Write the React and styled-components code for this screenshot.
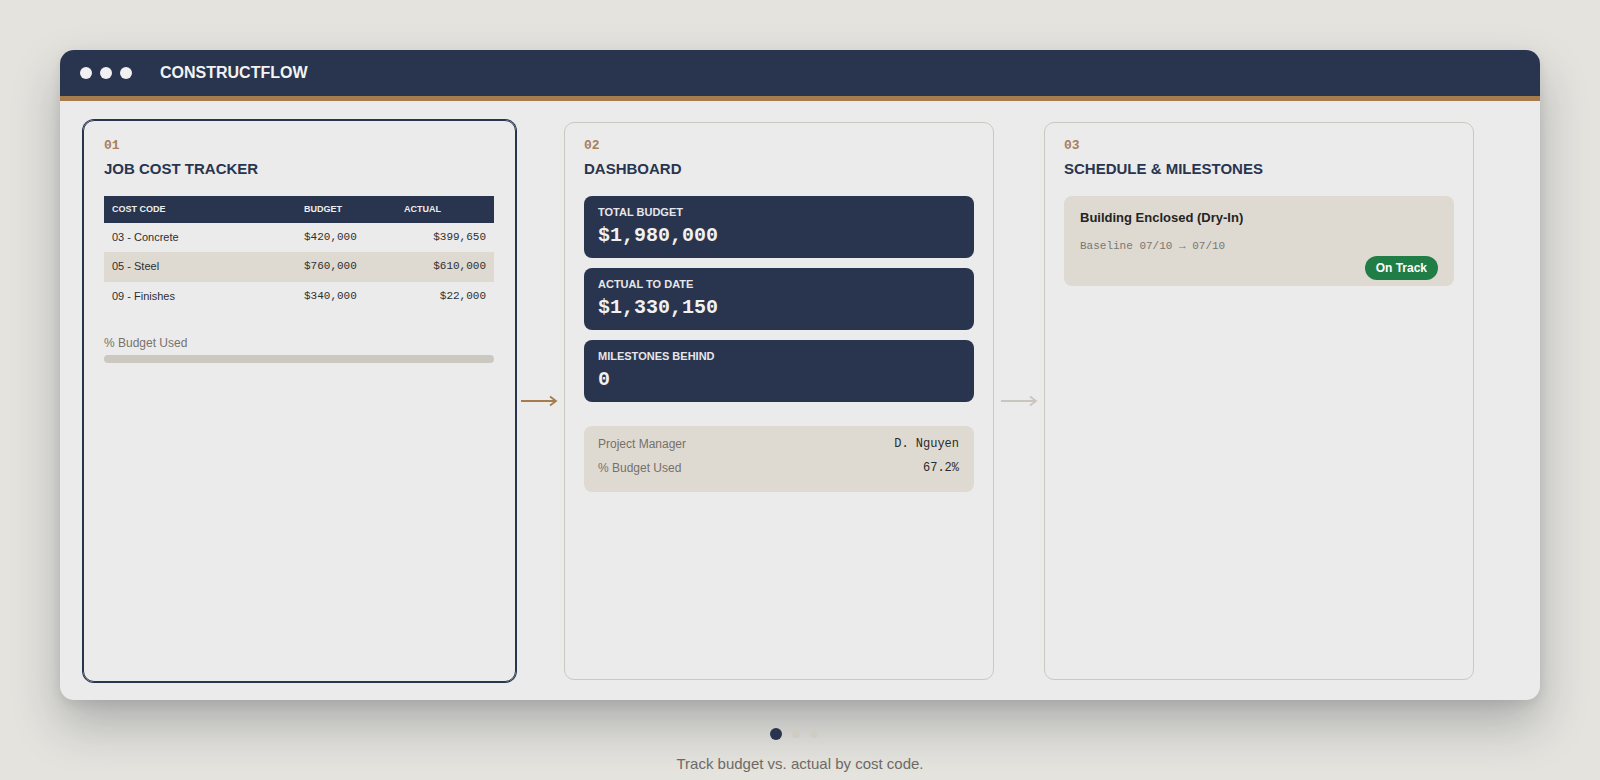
import styled, { createGlobalStyle } from "styled-components";

const NAVY = "#29354f";
const GOLD = "#a67c4e";
const BEIGE = "#dedad2";

const GlobalStyle = createGlobalStyle`
  * { box-sizing: border-box; }
  html, body {
    margin: 0;
    background: #e4e3de;
    font-family: "Liberation Sans", Arial, sans-serif;
  }
`;

const costRows = [
  { code: "03 - Concrete", budget: "$420,000", actual: "$399,650" },
  { code: "05 - Steel", budget: "$760,000", actual: "$610,000" },
  { code: "09 - Finishes", budget: "$340,000", actual: "$22,000" },
];

const stats = [
  { label: "TOTAL BUDGET", value: "$1,980,000" },
  { label: "ACTUAL TO DATE", value: "$1,330,150" },
  { label: "MILESTONES BEHIND", value: "0" },
];

export default function App() {
  return (
    <>
      <GlobalStyle />
      <Page>
        <Window>
          <TitleBar>
            <Lights>
              <Light />
              <Light />
              <Light />
            </Lights>
            <Brand>CONSTRUCTFLOW</Brand>
          </TitleBar>

          <Track>
            <Panel $active>
              <StepNum>01</StepNum>
              <StepTitle>JOB COST TRACKER</StepTitle>
              <CostTable>
                <thead>
                  <tr>
                    <Th>COST CODE</Th>
                    <Th $w={100}>BUDGET</Th>
                    <Th $w={98}>ACTUAL</Th>
                  </tr>
                </thead>
                <tbody>
                  {costRows.map((r) => (
                    <Tr key={r.code}>
                      <Td>{r.code}</Td>
                      <Td $mono>{r.budget}</Td>
                      <Td $mono $right>
                        {r.actual}
                      </Td>
                    </Tr>
                  ))}
                </tbody>
              </CostTable>
              <BarLabel>% Budget Used</BarLabel>
              <BarTrack>
                <BarFill style={{ width: "0%" }} />
              </BarTrack>
            </Panel>

            <Connector>
              <Arrow color={GOLD} />
            </Connector>

            <Panel>
              <StepNum>02</StepNum>
              <StepTitle>DASHBOARD</StepTitle>
              <StatList>
                {stats.map((s) => (
                  <StatCard key={s.label}>
                    <StatLabel>{s.label}</StatLabel>
                    <StatValue>{s.value}</StatValue>
                  </StatCard>
                ))}
              </StatList>
              <InfoBox>
                <InfoRow>
                  <InfoKey>Project Manager</InfoKey>
                  <InfoVal>D. Nguyen</InfoVal>
                </InfoRow>
                <InfoRow>
                  <InfoKey>% Budget Used</InfoKey>
                  <InfoVal>67.2%</InfoVal>
                </InfoRow>
              </InfoBox>
            </Panel>

            <Connector>
              <Arrow color="#c9c6bf" />
            </Connector>

            <Panel>
              <StepNum>03</StepNum>
              <StepTitle>SCHEDULE &amp; MILESTONES</StepTitle>
              <Milestone>
                <MilestoneName>Building Enclosed (Dry-In)</MilestoneName>
                <MilestoneDates>Baseline 07/10 → 07/10</MilestoneDates>
                <PillRow>
                  <Pill>On Track</Pill>
                </PillRow>
              </Milestone>
            </Panel>
          </Track>
        </Window>

        <Pager>
          <Dot $active />
          <Dot />
          <Dot />
        </Pager>
        <Caption>Track budget vs. actual by cost code.</Caption>
      </Page>
    </>
  );
}

function Arrow({ color }) {
  return (
    <svg width="38" height="12" viewBox="0 0 38 12" fill="none">
      <path d="M1 6H36" stroke={color} strokeWidth="2" />
      <path d="M30 1.5L36 6L30 10.5" stroke={color} strokeWidth="1.8" />
    </svg>
  );
}

const Page = styled.div`
  display: flex;
  flex-direction: column;
  align-items: center;
  padding-top: 50px;
`;

const Window = styled.div`
  width: 1480px;
  height: 650px;
  background: #ebebeb;
  border-radius: 14px;
  overflow: hidden;
  box-shadow: 0 24px 48px rgba(30, 35, 45, 0.28), 0 4px 12px rgba(0, 0, 0, 0.08);
  display: flex;
  flex-direction: column;
`;

const TitleBar = styled.div`
  height: 51px;
  flex: 0 0 51px;
  background: ${NAVY};
  border-bottom: 5px solid ${GOLD};
  display: flex;
  align-items: center;
  padding: 0 20px;
  gap: 28px;
`;

const Lights = styled.div`
  display: flex;
  gap: 8px;
`;

const Light = styled.span`
  width: 12px;
  height: 12px;
  border-radius: 50%;
  background: #f1f1f1;
`;

const Brand = styled.div`
  color: #f3f3f3;
  font-weight: 700;
  font-size: 16px;
`;

const Track = styled.div`
  flex: 1;
  display: flex;
  align-items: stretch;
  padding: 21px 24px 20px;
`;

/* the active step is drawn 2px larger on each side, its content stays put */
const Panel = styled.section`
  flex: 0 0 ${(p) => (p.$active ? 433 : 430)}px;
  margin: ${(p) => (p.$active ? "-2px -2px -2px -1px" : "0")};
  border: 1px solid ${(p) => (p.$active ? NAVY : "#cbc8c0")};
  box-shadow: ${(p) => (p.$active ? `0 0 0 1px ${NAVY}` : "none")};
  border-radius: ${(p) => (p.$active ? 11 : 10)}px;
  padding: ${(p) => (p.$active ? "17px 21px 16px 20px" : "15px 19px 14px")};
`;

const Connector = styled.div`
  flex: 0 0 50px;
  display: flex;
  align-items: center;
  justify-content: center;
`;

const StepNum = styled.div`
  font-family: "Liberation Mono", "Courier New", monospace;
  font-weight: 700;
  font-size: 13px;
  line-height: 15px;
  color: #a98059;
  margin-bottom: 7px;
`;

const StepTitle = styled.h2`
  margin: 0 0 18px;
  font-size: 15px;
  line-height: 18px;
  font-weight: 700;
  color: ${NAVY};
`;

const CostTable = styled.table`
  width: 100%;
  border-collapse: collapse;
`;

const Th = styled.th`
  background: ${NAVY};
  color: #eeeeee;
  font-size: 9px;
  font-weight: 700;
  text-align: left;
  padding: 8px;
  line-height: 10.7px;
  width: ${(p) => (p.$w ? `${p.$w}px` : "auto")};
`;

const Tr = styled.tr`
  &:nth-child(even) {
    background: ${BEIGE};
  }
`;

const Td = styled.td`
  padding: 8px;
  line-height: 13.6px;
  font-size: 11px;
  color: #2f2f2f;
  font-family: ${(p) =>
    p.$mono ? `"Liberation Mono", "Courier New", monospace` : "inherit"};
  text-align: ${(p) => (p.$right ? "right" : "left")};
`;

const BarLabel = styled.div`
  margin-top: 25px;
  font-size: 12px;
  line-height: 14px;
  color: #77736c;
`;

const BarTrack = styled.div`
  margin-top: 5px;
  height: 8px;
  border-radius: 4px;
  background: #cbc8c0;
  overflow: hidden;
`;

const BarFill = styled.div`
  height: 100%;
  background: ${GOLD};
`;

const StatList = styled.div`
  display: flex;
  flex-direction: column;
  gap: 10px;
`;

const StatCard = styled.div`
  background: ${NAVY};
  border-radius: 8px;
  height: 62px;
  padding: 10px 14px;
`;

const StatLabel = styled.div`
  font-size: 11px;
  line-height: 13px;
  font-weight: 700;
  color: #e6e7ea;
`;

const StatValue = styled.div`
  margin-top: 5px;
  font-family: "Liberation Mono", "Courier New", monospace;
  font-weight: 700;
  font-size: 20px;
  line-height: 24px;
  color: #f1f1f1;
`;

const InfoBox = styled.div`
  margin-top: 24px;
  background: ${BEIGE};
  border-radius: 8px;
  padding: 6px 15px 12px 14px;
`;

const InfoRow = styled.div`
  display: flex;
  justify-content: space-between;
  line-height: 24px;
  font-size: 12px;
`;

const InfoKey = styled.span`
  color: #75716a;
`;

const InfoVal = styled.span`
  font-family: "Liberation Mono", "Courier New", monospace;
  color: #2b2b2b;
`;

const Milestone = styled.div`
  background: ${BEIGE};
  border-radius: 8px;
  padding: 14px 16px 6px;
`;

const MilestoneName = styled.div`
  font-size: 13px;
  line-height: 15px;
  font-weight: 700;
  color: #242424;
`;

const MilestoneDates = styled.div`
  margin-top: 15px;
  font-family: "Liberation Mono", "Courier New", monospace;
  font-size: 11px;
  line-height: 13px;
  color: #7a7770;
`;

const PillRow = styled.div`
  display: flex;
  justify-content: flex-end;
  margin-top: 3px;
`;

const Pill = styled.span`
  background: #1f7d45;
  color: #ffffff;
  font-size: 12px;
  font-weight: 700;
  line-height: 14px;
  padding: 5px 11px;
  border-radius: 13px;
`;

const Pager = styled.div`
  margin-top: 28px;
  margin-right: 12px;
  display: flex;
  align-items: center;
  gap: 10px;
  height: 12px;
`;

const Dot = styled.span`
  width: ${(p) => (p.$active ? 12 : 8)}px;
  height: ${(p) => (p.$active ? 12 : 8)}px;
  border-radius: 50%;
  background: ${(p) => (p.$active ? NAVY : "#cfccc4")};
`;

const Caption = styled.div`
  margin-top: 15px;
  font-size: 15px;
  line-height: 17px;
  color: #6d6a64;
`;
